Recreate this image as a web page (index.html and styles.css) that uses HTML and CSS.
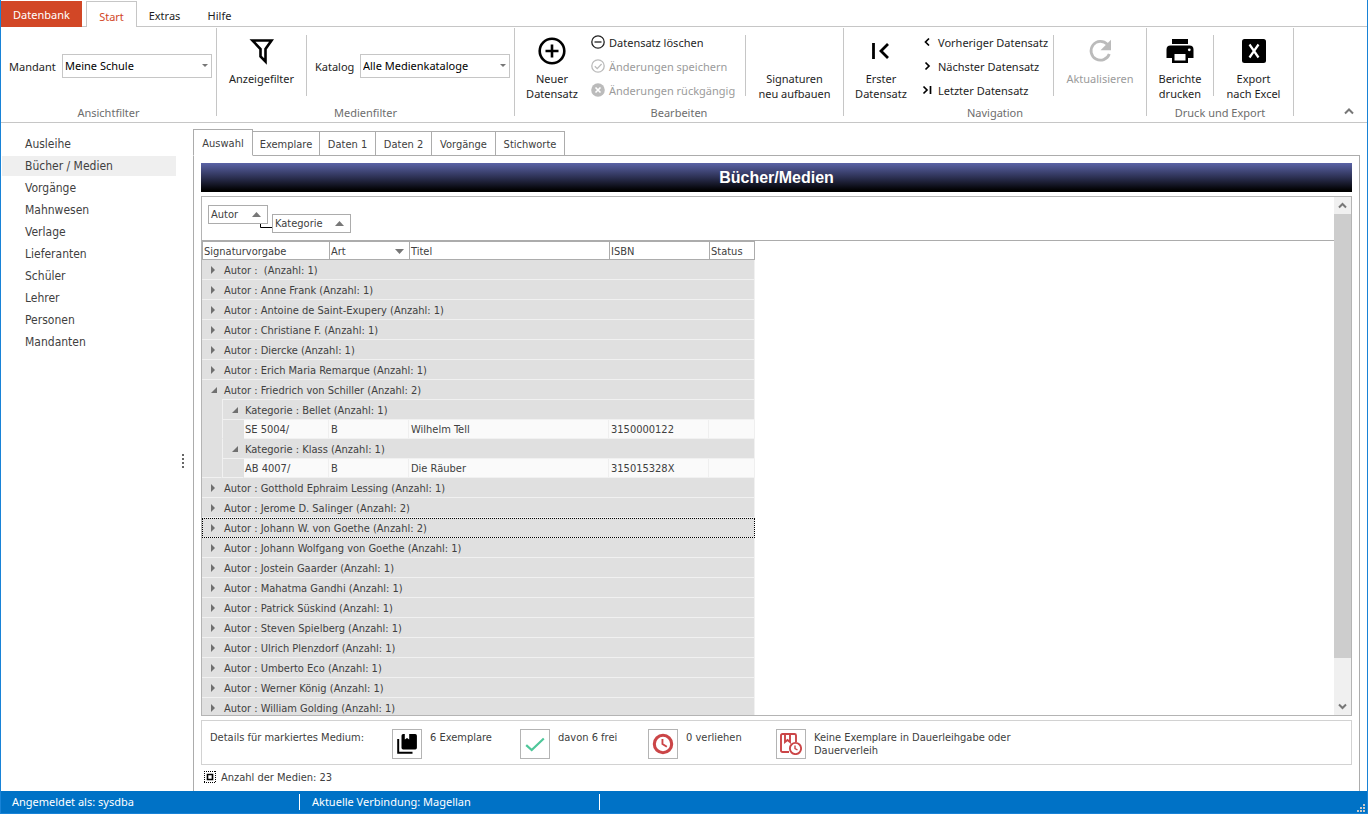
FILE: index.html
```html
<!DOCTYPE html>
<html lang="de">
<head>
<meta charset="utf-8">
<title>Bücher/Medien</title>
<link rel="stylesheet" href="styles.css">
</head>
<body>
<div class="window">
  <nav class="menu-tabs">
    <button class="menu-tab file-tab">Datenbank</button>
    <button class="menu-tab current">Start</button>
    <button class="menu-tab">Extras</button>
    <button class="menu-tab">Hilfe</button>
  </nav>

  <header class="ribbon">
    <section class="group">
      <div class="group-body">
        <label class="field"><span>Mandant</span>
          <span class="combo"><select><option>Meine Schule</option></select><svg class="caret" viewBox="0 0 6 3"><path d="M0 0h6L3 3z"/></svg></span>
        </label>
      </div>
      <h2 class="caption">Ansichtfilter</h2>
    </section>
    <span class="group-rule"></span>

    <section class="group">
      <div class="group-body">
        <button class="big w-filter">
          <svg class="icon" viewBox="0 0 28 28"><path d="M4.500 3.500h19l-6 8.500v12.500l-5-5V12z" fill="none" stroke="#000" stroke-width="2.600"/></svg>
          <span>Anzeigefilter</span>
        </button>
        <span class="rule"></span>
        <label class="field"><span>Katalog</span>
          <span class="combo"><select><option>Alle Medienkataloge</option></select><svg class="caret" viewBox="0 0 6 3"><path d="M0 0h6L3 3z"/></svg></span>
        </label>
      </div>
      <h2 class="caption">Medienfilter</h2>
    </section>
    <span class="group-rule"></span>

    <section class="group">
      <div class="group-body">
        <button class="big w-new">
          <svg class="icon" viewBox="0 0 28 28"><g fill="none" stroke="#000" stroke-width="2.600"><circle cx="14" cy="14" r="12.300"/><path d="M7.500 14h13M14 7.500v13"/></g></svg>
          <span>Neuer<br>Datensatz</span>
        </button>
        <div class="stack w-edit">
          <button class="small"><svg class="mini" viewBox="0 0 14 14"><g fill="none" stroke="#222" stroke-width="1.300"><circle cx="7" cy="7" r="6.200"/><path d="M3.500 7h7"/></g></svg>Datensatz löschen</button>
          <button class="small" disabled><svg class="mini" viewBox="0 0 14 14"><g fill="none" stroke="#bbb" stroke-width="1.300"><circle cx="7" cy="7" r="6.200"/><path d="M3.800 7.200l2.400 2.400 4.400-4.600"/></g></svg>Änderungen speichern</button>
          <button class="small" disabled><svg class="mini" viewBox="0 0 14 14"><circle cx="7" cy="7" r="6.800" fill="#bbb"/><path d="M4.500 4.500l5 5M9.500 4.500l-5 5" stroke="#fff" stroke-width="1.600"/></svg>Änderungen rückgängig</button>
        </div>
        <span class="rule"></span>
        <button class="big w-sign"><span class="icon"></span><span>Signaturen<br>neu aufbauen</span></button>
      </div>
      <h2 class="caption">Bearbeiten</h2>
    </section>
    <span class="group-rule"></span>

    <section class="group">
      <div class="group-body">
        <button class="big w-first">
          <svg class="icon" viewBox="0 0 28 28"><path d="M6.500 6v16M21 7l-7 7 7 7" fill="none" stroke="#000" stroke-width="2.800"/></svg>
          <span>Erster<br>Datensatz</span>
        </button>
        <div class="stack w-nav">
          <button class="small"><svg class="mini" viewBox="0 0 14 14"><path d="M9 3.500L5.500 7 9 10.500" fill="none" stroke="#000" stroke-width="1.700"/></svg>Vorheriger Datensatz</button>
          <button class="small"><svg class="mini" viewBox="0 0 14 14"><path d="M5.500 3.500L9 7l-3.500 3.500" fill="none" stroke="#000" stroke-width="1.700"/></svg>Nächster Datensatz</button>
          <button class="small"><svg class="mini" viewBox="0 0 14 14"><path d="M3.500 3.500L7 7l-3.500 3.500M10.500 3v8" fill="none" stroke="#000" stroke-width="1.700"/></svg>Letzter Datensatz</button>
        </div>
        <span class="rule"></span>
        <button class="big w-refresh" disabled>
          <svg class="icon" viewBox="0 0 28 28"><path d="M21.300 7.300A9.400 9.400 0 1 0 23.300 17" fill="none" stroke="#bbb" stroke-width="2.800"/><path d="M25 2.800v10.500H14.500z" fill="#bbb"/></svg>
          <span>Aktualisieren</span>
        </button>
      </div>
      <h2 class="caption">Navigation</h2>
    </section>
    <span class="group-rule"></span>

    <section class="group">
      <div class="group-body">
        <button class="big w-print">
          <svg class="icon" viewBox="0 0 28 28"><path d="M6 2h16v5H6z"/><path d="M4.500 8.500h19a4 4 0 0 1 4 4V21H22v5H6v-5H.500v-8.500a4 4 0 0 1 4-4z"/><path d="M8.500 17h11v6.500h-11z" fill="#fff"/><circle cx="23.300" cy="12.800" r="1.400" fill="#fff"/></svg>
          <span>Berichte<br>drucken</span>
        </button>
        <span class="rule"></span>
        <button class="big w-excel">
          <svg class="icon" viewBox="0 0 28 28"><rect x="2" y="2" width="24" height="24" rx="2.500"/><path d="M9.500 7.500l9 13M18.500 7.500l-9 13" stroke="#fff" stroke-width="2.200"/></svg>
          <span>Export<br>nach Excel</span>
        </button>
      </div>
      <h2 class="caption">Druck und Export</h2>
    </section>
    <span class="group-rule"></span>
    <button class="collapse" aria-label="Menüband reduzieren"><svg viewBox="0 0 10 7"><path d="M1 5.500l4-4 4 4" fill="none" stroke="#777" stroke-width="2"/></svg></button>
  </header>

  <div class="workspace">
    <nav class="sidebar">
      <a href="#">Ausleihe</a>
      <a href="#" class="selected">Bücher / Medien</a>
      <a href="#">Vorgänge</a>
      <a href="#">Mahnwesen</a>
      <a href="#">Verlage</a>
      <a href="#">Lieferanten</a>
      <a href="#">Schüler</a>
      <a href="#">Lehrer</a>
      <a href="#">Personen</a>
      <a href="#">Mandanten</a>
    </nav>
    <div class="splitter"><svg viewBox="0 0 2 14"><path d="M0 0h2v2H0zM0 4h2v2H0zM0 8h2v2H0zM0 12h2v2H0z" fill="#666"/></svg></div>

    <main class="content">
      <div class="page-tabs">
        <button class="page-tab active">Auswahl</button>
        <button class="page-tab">Exemplare</button>
        <button class="page-tab">Daten 1</button>
        <button class="page-tab">Daten 2</button>
        <button class="page-tab">Vorgänge</button>
        <button class="page-tab">Stichworte</button>
        <span class="tab-line"></span>
      </div>
      <div class="page">
        <h1 class="banner">Bücher/Medien</h1>

        <div class="grid">
          <div class="grid-main">
            <div class="group-panel">
              <button class="chip chip-author">Autor<svg class="sort" viewBox="0 0 9 5"><path d="M0 5L4.500 0 9 5z"/></svg></button>
              <svg class="link" viewBox="0 0 12 4"><path d="M.500 0v3.500H12" fill="none" stroke="#000"/></svg>
              <button class="chip chip-category">Kategorie<svg class="sort" viewBox="0 0 9 5"><path d="M0 5L4.500 0 9 5z"/></svg></button>
            </div>
            <div class="table-clip">
              <table class="media">
                <colgroup><col class="c-indent"><col class="c-indent2"><col class="c-sign"><col class="c-kind"><col class="c-title"><col class="c-isbn"><col class="c-status"></colgroup>
                <thead>
                  <tr><th colspan="3">Signaturvorgabe</th><th><span class="sorted">Art<svg class="sort" viewBox="0 0 9 5"><path d="M0 0h9L4.500 5z"/></svg></span></th><th>Titel</th><th>ISBN</th><th>Status</th></tr>
                </thead>
                <tbody>
                  <tr class="g"><td><i class="closed"></i></td><td colspan="6">Autor :&nbsp; (Anzahl: 1)</td></tr>
                  <tr class="g"><td><i class="closed"></i></td><td colspan="6">Autor : Anne Frank (Anzahl: 1)</td></tr>
                  <tr class="g"><td><i class="closed"></i></td><td colspan="6">Autor : Antoine de Saint-Exupery (Anzahl: 1)</td></tr>
                  <tr class="g"><td><i class="closed"></i></td><td colspan="6">Autor : Christiane F. (Anzahl: 1)</td></tr>
                  <tr class="g"><td><i class="closed"></i></td><td colspan="6">Autor : Diercke (Anzahl: 1)</td></tr>
                  <tr class="g"><td><i class="closed"></i></td><td colspan="6">Autor : Erich Maria Remarque (Anzahl: 1)</td></tr>
                  <tr class="g open-row"><td><i class="open"></i></td><td colspan="6">Autor : Friedrich von Schiller (Anzahl: 2)</td></tr>
                  <tr class="g sub"><td class="indent"></td><td class="toggle"><i class="open"></i></td><td colspan="5">Kategorie : Bellet (Anzahl: 1)</td></tr>
                  <tr class="d"><td class="indent"></td><td class="indent edge"></td><td>SE 5004/</td><td>B</td><td>Wilhelm Tell</td><td>3150000122</td><td></td></tr>
                  <tr class="g sub"><td class="indent"></td><td class="toggle"><i class="open"></i></td><td colspan="5">Kategorie : Klass (Anzahl: 1)</td></tr>
                  <tr class="d last"><td class="indent"></td><td class="indent edge"></td><td>AB 4007/</td><td>B</td><td>Die Räuber</td><td>315015328X</td><td></td></tr>
                  <tr class="g"><td><i class="closed"></i></td><td colspan="6">Autor : Gotthold Ephraim Lessing (Anzahl: 1)</td></tr>
                  <tr class="g"><td><i class="closed"></i></td><td colspan="6">Autor : Jerome D. Salinger (Anzahl: 2)</td></tr>
                  <tr class="g focused"><td><i class="closed"></i></td><td colspan="6">Autor : Johann W. von Goethe (Anzahl: 2)</td></tr>
                  <tr class="g"><td><i class="closed"></i></td><td colspan="6">Autor : Johann Wolfgang von Goethe (Anzahl: 1)</td></tr>
                  <tr class="g"><td><i class="closed"></i></td><td colspan="6">Autor : Jostein Gaarder (Anzahl: 1)</td></tr>
                  <tr class="g"><td><i class="closed"></i></td><td colspan="6">Autor : Mahatma Gandhi (Anzahl: 1)</td></tr>
                  <tr class="g"><td><i class="closed"></i></td><td colspan="6">Autor : Patrick Süskind (Anzahl: 1)</td></tr>
                  <tr class="g"><td><i class="closed"></i></td><td colspan="6">Autor : Steven Spielberg (Anzahl: 1)</td></tr>
                  <tr class="g"><td><i class="closed"></i></td><td colspan="6">Autor : Ulrich Plenzdorf (Anzahl: 1)</td></tr>
                  <tr class="g"><td><i class="closed"></i></td><td colspan="6">Autor : Umberto Eco (Anzahl: 1)</td></tr>
                  <tr class="g"><td><i class="closed"></i></td><td colspan="6">Autor : Werner König (Anzahl: 1)</td></tr>
                  <tr class="g"><td><i class="closed"></i></td><td colspan="6">Autor : William Golding (Anzahl: 1)</td></tr>
                </tbody>
              </table>
            </div>
          </div>
          <div class="scrollbar">
            <button class="scroll-step" aria-label="Nach oben"><svg viewBox="0 0 9 7"><path d="M1 5.500L4.500 2 8 5.500" fill="none" stroke="#777" stroke-width="2"/></svg></button>
            <div class="thumb"></div>
            <div class="track"></div>
            <button class="scroll-step" aria-label="Nach unten"><svg viewBox="0 0 9 7"><path d="M1 1.500L4.500 5 8 1.500" fill="none" stroke="#777" stroke-width="2"/></svg></button>
          </div>
        </div>

        <section class="details">
          <p class="details-title">Details für markiertes Medium:</p>
          <div class="detail">
            <span class="tile"><svg viewBox="0 0 20 20"><path d="M2 5.500V18h13" fill="none" stroke="#000" stroke-width="1.800"/><path d="M6.500 1H8v5l2-1.500L12 6V1h5.500Q19 1 19 2.500v11q0 1.500-1.500 1.500h-11Q5 15 5 13.500v-11Q5 1 6.500 1z"/></svg></span>
            <p>6 Exemplare</p>
          </div>
          <div class="detail">
            <span class="tile"><svg viewBox="0 0 20 20"><path d="M2 11l5 4.500L18 5" fill="none" stroke="#4fc79a" stroke-width="2"/></svg></span>
            <p>davon 6 frei</p>
          </div>
          <div class="detail">
            <span class="tile"><svg viewBox="0 0 20 20"><g fill="none" stroke="#cb4547"><circle cx="10" cy="10" r="7.900" stroke-width="2.800"/><path d="M9.500 5.500V10l4 2.500" stroke-width="1.700"/></g></svg></span>
            <p>0 verliehen</p>
          </div>
          <div class="detail wide">
            <span class="tile"><svg viewBox="0 0 22 22"><g fill="none" stroke="#cb4547" stroke-width="1.900"><path d="M9 19H2.500Q1 19 1 17.500v-15Q1 1 2.500 1h12Q16 1 16 2.500V9M5 1v8l2.500-2L10 9V1"/><circle cx="15.500" cy="15.500" r="5.600"/><path d="M15 12.500v3l2.500 1.500" stroke-width="1.400"/></g></svg></span>
            <p>Keine Exemplare in Dauerleihgabe oder Dauerverleih</p>
          </div>
        </section>

        <p class="count"><svg viewBox="0 0 12 12"><g fill="none" stroke="#000"><path d="M0 .500h12M0 11.500h12M.500 0v12M11.500 0v12" stroke-dasharray="1 1"/><path d="M3.500 3.500h5v5h-5z" stroke-width="1.600"/></g></svg>Anzahl der Medien: 23</p>
      </div>
    </main>
  </div>

  <footer class="status">
    <span class="status-cell">Angemeldet als: sysdba</span>
    <span class="status-cell">Aktuelle Verbindung: Magellan</span>
    <svg class="grip" viewBox="0 0 8 8"><path d="M6 0h2v2H6zM3 3h2v2H3zM6 3h2v2H6zM0 6h2v2H0zM3 6h2v2H3zM6 6h2v2H6z" fill="#c9c9c9"/></svg>
  </footer>
</div>
</body>
</html>
```

FILE: styles.css
```css
* { box-sizing: border-box; }

body {
  margin: 0;
  background: #fff;
  color: #1e1e1e;
  font: 11px/15px "Noto Sans", "Open Sans", sans-serif;
}

h1, h2, p { margin: 0; font-weight: normal; }

button {
  margin: 0;
  padding: 0;
  border: 0;
  background: none;
  color: inherit;
  font: inherit;
}

svg { display: block; flex: none; }

.window {
  display: flex;
  flex-direction: column;
  height: 100vh;
  border-left: 1px solid #1883d7;
  border-right: 1px solid #1883d7;
}

/* Menu tabs */
.menu-tabs {
  display: flex;
  height: 27px;
  flex: none;
  padding-top: 1px;
  border-bottom: 1px solid #c6c6c6;
}
.menu-tab { width: 55px; height: 26px; padding-top: 3px; }
.file-tab { width: 81px; margin-right: 4px; padding-top: 0; background: #d24726; color: #fff; }
.current { width: 51px; border: 1px solid #c6c6c6; border-bottom: 0; background: #fff; color: #d24726; }

/* Ribbon */
.ribbon {
  display: flex;
  flex: none;
  height: 96px;
  padding-top: 1px;
  border-bottom: 1px solid #c6c6c6;
}
.group { display: flex; flex-direction: column; }
.group-body { display: flex; height: 77px; }
.caption { color: #6d6d6d; font-size: 11px; line-height: 16px; text-align: center; }
.group-rule { width: 1px; height: 88px; background: #c6c6c6; }
.rule { width: 1px; height: 61px; margin-top: 7px; background: #c6c6c6; }

.field { display: flex; gap: 4px; align-items: center; height: 24px; margin: 26px 4px 0 8px; }
.field > span:first-child { width: 49px; white-space: nowrap; }
.rule + .field > span:first-child { width: 41px; }
.combo { position: relative; width: 150px; }
.combo select {
  display: block;
  width: 100%;
  height: 24px;
  padding: 0 16px 2px 2px;
  border: 1px solid #c6c6c6;
  border-radius: 0;
  background: #fff;
  color: #000;
  font: inherit;
  appearance: none;
}
.caret { position: absolute; right: 4px; top: 10px; width: 6px; height: 3px; fill: #777; }

.big { display: flex; flex-direction: column; align-items: center; padding-top: 9px; white-space: nowrap; }
.big .icon { width: 28px; height: 28px; margin-bottom: 6px; }
.w-filter { width: 89px; }
.w-new { width: 74px; }
.w-sign { width: 97px; }
.w-first { width: 74px; }
.w-refresh { width: 92px; }
.w-print { width: 66px; }
.w-excel { width: 79px; }
button:disabled { color: #9b9b9b; }

.stack { display: flex; flex-direction: column; padding-top: 2px; }
.w-edit { width: 156px; padding-left: 2px; }
.w-nav { width: 135px; padding-left: 2px; }
.small { display: flex; gap: 4px; align-items: center; height: 24px; white-space: nowrap; }
.mini { width: 14px; height: 14px; }

.collapse { display: flex; flex: 1; align-items: flex-end; justify-content: flex-end; padding: 0 13px 7px 0; }
.collapse svg { width: 10px; height: 7px; }

/* Sidebar */
.workspace { display: flex; flex: 1; min-height: 0; }
.sidebar {
  display: flex;
  flex: none;
  flex-direction: column;
  gap: 2px;
  width: 176px;
  padding: 11px 1px 0;
  color: #3f3f3f;
  font: 12px/20px "DejaVu Sans Condensed", "Noto Sans", sans-serif;
}
.sidebar a { padding-left: 23px; color: inherit; text-decoration: none; }
.sidebar .selected { background: #efefef; }
.splitter { display: flex; flex: none; align-items: center; width: 16px; padding: 8px 0 0 5px; }
.splitter svg { width: 2px; height: 14px; }

/* Content pages */
.content {
  display: flex;
  flex: 1;
  flex-direction: column;
  min-width: 0;
  padding: 6px 7px 0 0;
  color: #404040;
  font: 11px/13px "DejaVu Sans Condensed", "Noto Sans", sans-serif;
}
.page-tabs { display: flex; flex: none; align-items: flex-end; height: 27px; }
.page-tab {
  width: 56px;
  height: 25px;
  padding-top: 2px;
  border: solid #acacac;
  border-width: 1px 1px 1px 0;
}
.page-tab.active { width: 60px; height: 27px; border-left-width: 1px; border-bottom-color: transparent; }
.page-tab:nth-child(2) { width: 67px; }
.page-tab:nth-child(5) { width: 64px; }
.page-tab:nth-child(6) { width: 69px; }
.tab-line { flex: 1; height: 1px; background: #acacac; }
.page {
  display: flex;
  flex: 1;
  flex-direction: column;
  min-height: 0;
  padding: 7px 7px 0;
  border: solid #acacac;
  border-width: 0 1px;
}

.banner {
  flex: none;
  background: linear-gradient(#5a63a6, #2c3052 50%, #000 95%);
  color: #fff;
  font: bold 16px/29px "Liberation Sans", Arial, sans-serif;
  text-align: center;
}

/* Grid */
.grid { display: flex; flex: 1; min-height: 0; margin-top: 4px; border: 1px solid #b4b4b4; }
.grid-main { display: flex; flex: 1; flex-direction: column; min-width: 0; }
.group-panel {
  display: flex;
  flex: none;
  height: 44px;
  padding: 8px 6px 0;
  border-bottom: 1px solid #acacac;
}
.chip {
  display: flex;
  align-items: center;
  justify-content: space-between;
  height: 19px;
  padding: 0 6px 0 2px;
  border: 1px solid #acacac;
  background: #fff;
}
.chip-author { width: 60px; }
.chip-category { width: 79px; margin-top: 9px; }
.link { width: 12px; height: 4px; margin: 19px 0 0 -8px; }
.sort { width: 9px; height: 5px; fill: #777; }
.table-clip { flex: 1; min-height: 0; overflow: hidden; }

.media { width: 553px; border-collapse: separate; border-spacing: 0; table-layout: fixed; }
.c-indent { width: 20px; }
.c-indent2 { width: 22px; }
.c-sign { width: 85px; }
.c-kind { width: 80px; }
.c-title { width: 200px; }
.c-isbn { width: 100px; }
.c-status { width: 46px; }
.media th {
  height: 19px;
  padding: 2px 2px 0 1px;
  border: solid #acacac;
  border-width: 1px 0 1px 1px;
  font-weight: normal;
  text-align: left;
}
.media th:last-child { border-right-width: 1px; }
.sorted { display: flex; align-items: center; justify-content: space-between; padding-right: 3px; }
.media td { padding: 2px 2px 0; white-space: nowrap; }
.g td { height: 20px; background: #e0e0e0; border-bottom: 1px solid #f1f1f1; }
.g td:last-child { border-right: 1px solid #f1f1f1; }
.g td:first-child, .media .toggle { padding-top: 0; }
.open-row td:first-child { border-bottom-color: #e0e0e0; }
.g td.indent, .d td.indent { background: #e0e0e0; border-color: #e0e0e0; }
.sub .toggle, .d td.edge { border-left: 1px solid #f1f1f1; }
.media .sub td:last-child, .d td:nth-child(3) { padding-left: 1px; }
.d td { height: 19px; padding-top: 1px; background: #fafafa; border-bottom: 1px solid #f1f1f1; border-right: 1px solid #efefef; }
.last td.indent { border-bottom-color: #f1f1f1; }
.focused { outline: 1px dotted #000; outline-offset: -1px; }

i.closed, i.open { display: block; width: 0; height: 0; margin-left: 7px; border: solid transparent; }
i.closed { border-width: 4px 0 4px 4px; border-left-color: #707070; }
i.open { border-width: 0 0 6px 6px; border-bottom-color: #707070; }

.scrollbar { display: flex; flex: none; flex-direction: column; width: 17px; background: #f0f0f0; }
.scroll-step { display: flex; align-items: center; justify-content: center; height: 17px; }
.scroll-step svg { width: 9px; height: 7px; }
.thumb { flex: 11; background: #cdcdcd; }
.track { flex: 1; }

/* Details of the marked row */
.details { display: flex; flex: none; min-height: 45px; margin-top: 4px; padding: 8px 8px 5px; border: 1px solid #d2d2d2; }
.details p { padding-top: 2px; }
.details-title { width: 182px; }
.detail { display: flex; gap: 8px; width: 128px; }
.detail.wide { width: 240px; }
.tile { display: flex; flex: none; align-items: center; justify-content: center; width: 30px; height: 30px; border: 1px solid #b4b4b4; }
.tile svg { width: 22px; height: 22px; }
.count { display: flex; flex: none; gap: 5px; align-items: center; height: 26px; padding: 0 0 2px 3px; }
.count svg { width: 12px; height: 12px; }

/* Status bar */
.status {
  display: flex;
  flex: none;
  align-items: center;
  height: 23px;
  border-bottom: 1px solid #1883d7;
  background: #0072c6;
  color: #fff;
}
.status-cell { width: 300px; padding-left: 12px; border-right: 1px solid #fff; line-height: 16px; }
.status-cell:first-child { width: 299px; padding-left: 11px; }
.grip { align-self: flex-end; width: 8px; height: 8px; margin: 0 2px 1px auto; }
```
